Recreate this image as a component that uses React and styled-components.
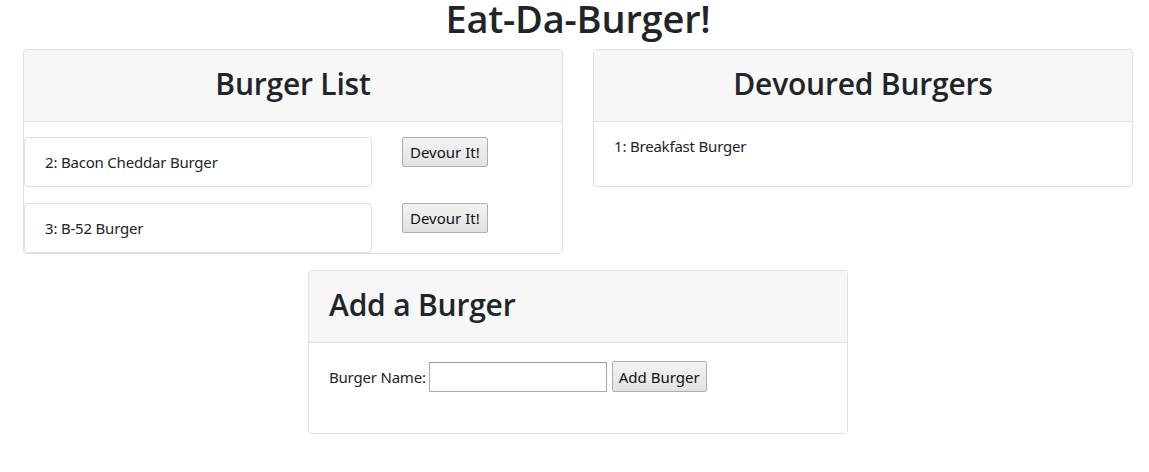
import React from "react";
import styled, { createGlobalStyle } from "styled-components";

const Global = createGlobalStyle`
  html, body { margin: 0; padding: 0; background: #fff; }
  body {
    font-family: "Noto Sans", "Open Sans", sans-serif;
    font-size: 15px;
    line-height: 1.5;
    color: #212529;
  }
  * { box-sizing: border-box; }
`;

const Page = styled.div`
  width: 1110px;
  margin-left: 23px;
`;

const Title = styled.h1`
  margin: 0 0 12px;
  font-family: "Open Sans", "Noto Sans", sans-serif;
  font-size: 38px;
  font-weight: 600;
  letter-spacing: -0.2px;
  line-height: 37px;
  text-align: center;
`;

const Row = styled.div`
  display: flex;
  gap: 30px;
  align-items: flex-start;
  justify-content: ${(p) => (p.$center ? "center" : "flex-start")};
  margin-top: ${(p) => p.$mt || 0}px;
`;

const Card = styled.div`
  width: 540px;
  border: 1px solid #dfdfdf;
  border-radius: 4px;
  background: #fff;
  overflow: hidden;
`;

const CardHeader = styled.div`
  background: #f7f7f7;
  border-bottom: 1px solid #dfdfdf;
  padding: 12px 20px;
  height: 72px;
`;

const HeaderTitle = styled.h2`
  margin: 0;
  font-family: "Open Sans", "Noto Sans", sans-serif;
  font-size: 30px;
  font-weight: 600;
  letter-spacing: -0.2px;
  line-height: 43px;
  text-align: ${(p) => (p.$left ? "left" : "center")};
`;

const ListBody = styled.div`
  display: flex;
  flex-direction: column;
  gap: 16px;
  padding-top: 15px;
`;

const ItemRow = styled.div`
  display: flex;
  align-items: flex-start;
  gap: 30px;
`;

const Item = styled.div`
  width: 348px;
  height: 50px;
  border: 1px solid #dfdfdf;
  border-radius: 4px;
  padding: 12px 20px;
  line-height: 24px;
  letter-spacing: -0.2px;
`;

const OldButton = styled.button`
  font-family: "Noto Sans", "Open Sans", sans-serif;
  font-size: 15px;
  color: #111;
  height: ${(p) => p.$h || 30}px;
  padding: 0 ${(p) => p.$px || 7}px;
  border: 1px solid #adadad;
  border-radius: 2px;
  background: linear-gradient(#f3f3f3, #e2e2e2);
  cursor: pointer;
`;

const CardBody = styled.div`
  padding: ${(p) => p.$pt || 12}px 20px ${(p) => p.$pb || 28}px;
  line-height: 24px;
  letter-spacing: -0.2px;
`;

const Form = styled.form`
  display: flex;
  align-items: center;
`;

const Label = styled.label`
  margin-right: 3px;
`;

const Input = styled.input`
  width: 178px;
  height: 30px;
  border: 1px solid #a9a9a9;
  border-top-color: #999;
  padding: 2px 4px;
  font-size: 15px;
  margin-right: 5px;
`;

export default function App() {
  return (
    <>
      <Global />
      <Page>
        <Title>Eat-Da-Burger!</Title>
        <Row>
          <Card>
            <CardHeader>
              <HeaderTitle>Burger List</HeaderTitle>
            </CardHeader>
            <ListBody>
              <ItemRow>
                <Item>2: Bacon Cheddar Burger</Item>
                <OldButton>Devour It!</OldButton>
              </ItemRow>
              <ItemRow>
                <Item>3: B-52 Burger</Item>
                <OldButton>Devour It!</OldButton>
              </ItemRow>
            </ListBody>
          </Card>
          <Card>
            <CardHeader>
              <HeaderTitle>Devoured Burgers</HeaderTitle>
            </CardHeader>
            <CardBody>1: Breakfast Burger</CardBody>
          </Card>
        </Row>
        <Row $center $mt={16}>
          <Card>
            <CardHeader>
              <HeaderTitle $left>Add a Burger</HeaderTitle>
            </CardHeader>
            <CardBody $pt={18} $pb={41}>
              <Form onSubmit={(e) => e.preventDefault()}>
                <Label>Burger Name:</Label>
                <Input type="text" />
                <OldButton $h={31} $px={6}>Add Burger</OldButton>
              </Form>
            </CardBody>
          </Card>
        </Row>
      </Page>
    </>
  );
}
